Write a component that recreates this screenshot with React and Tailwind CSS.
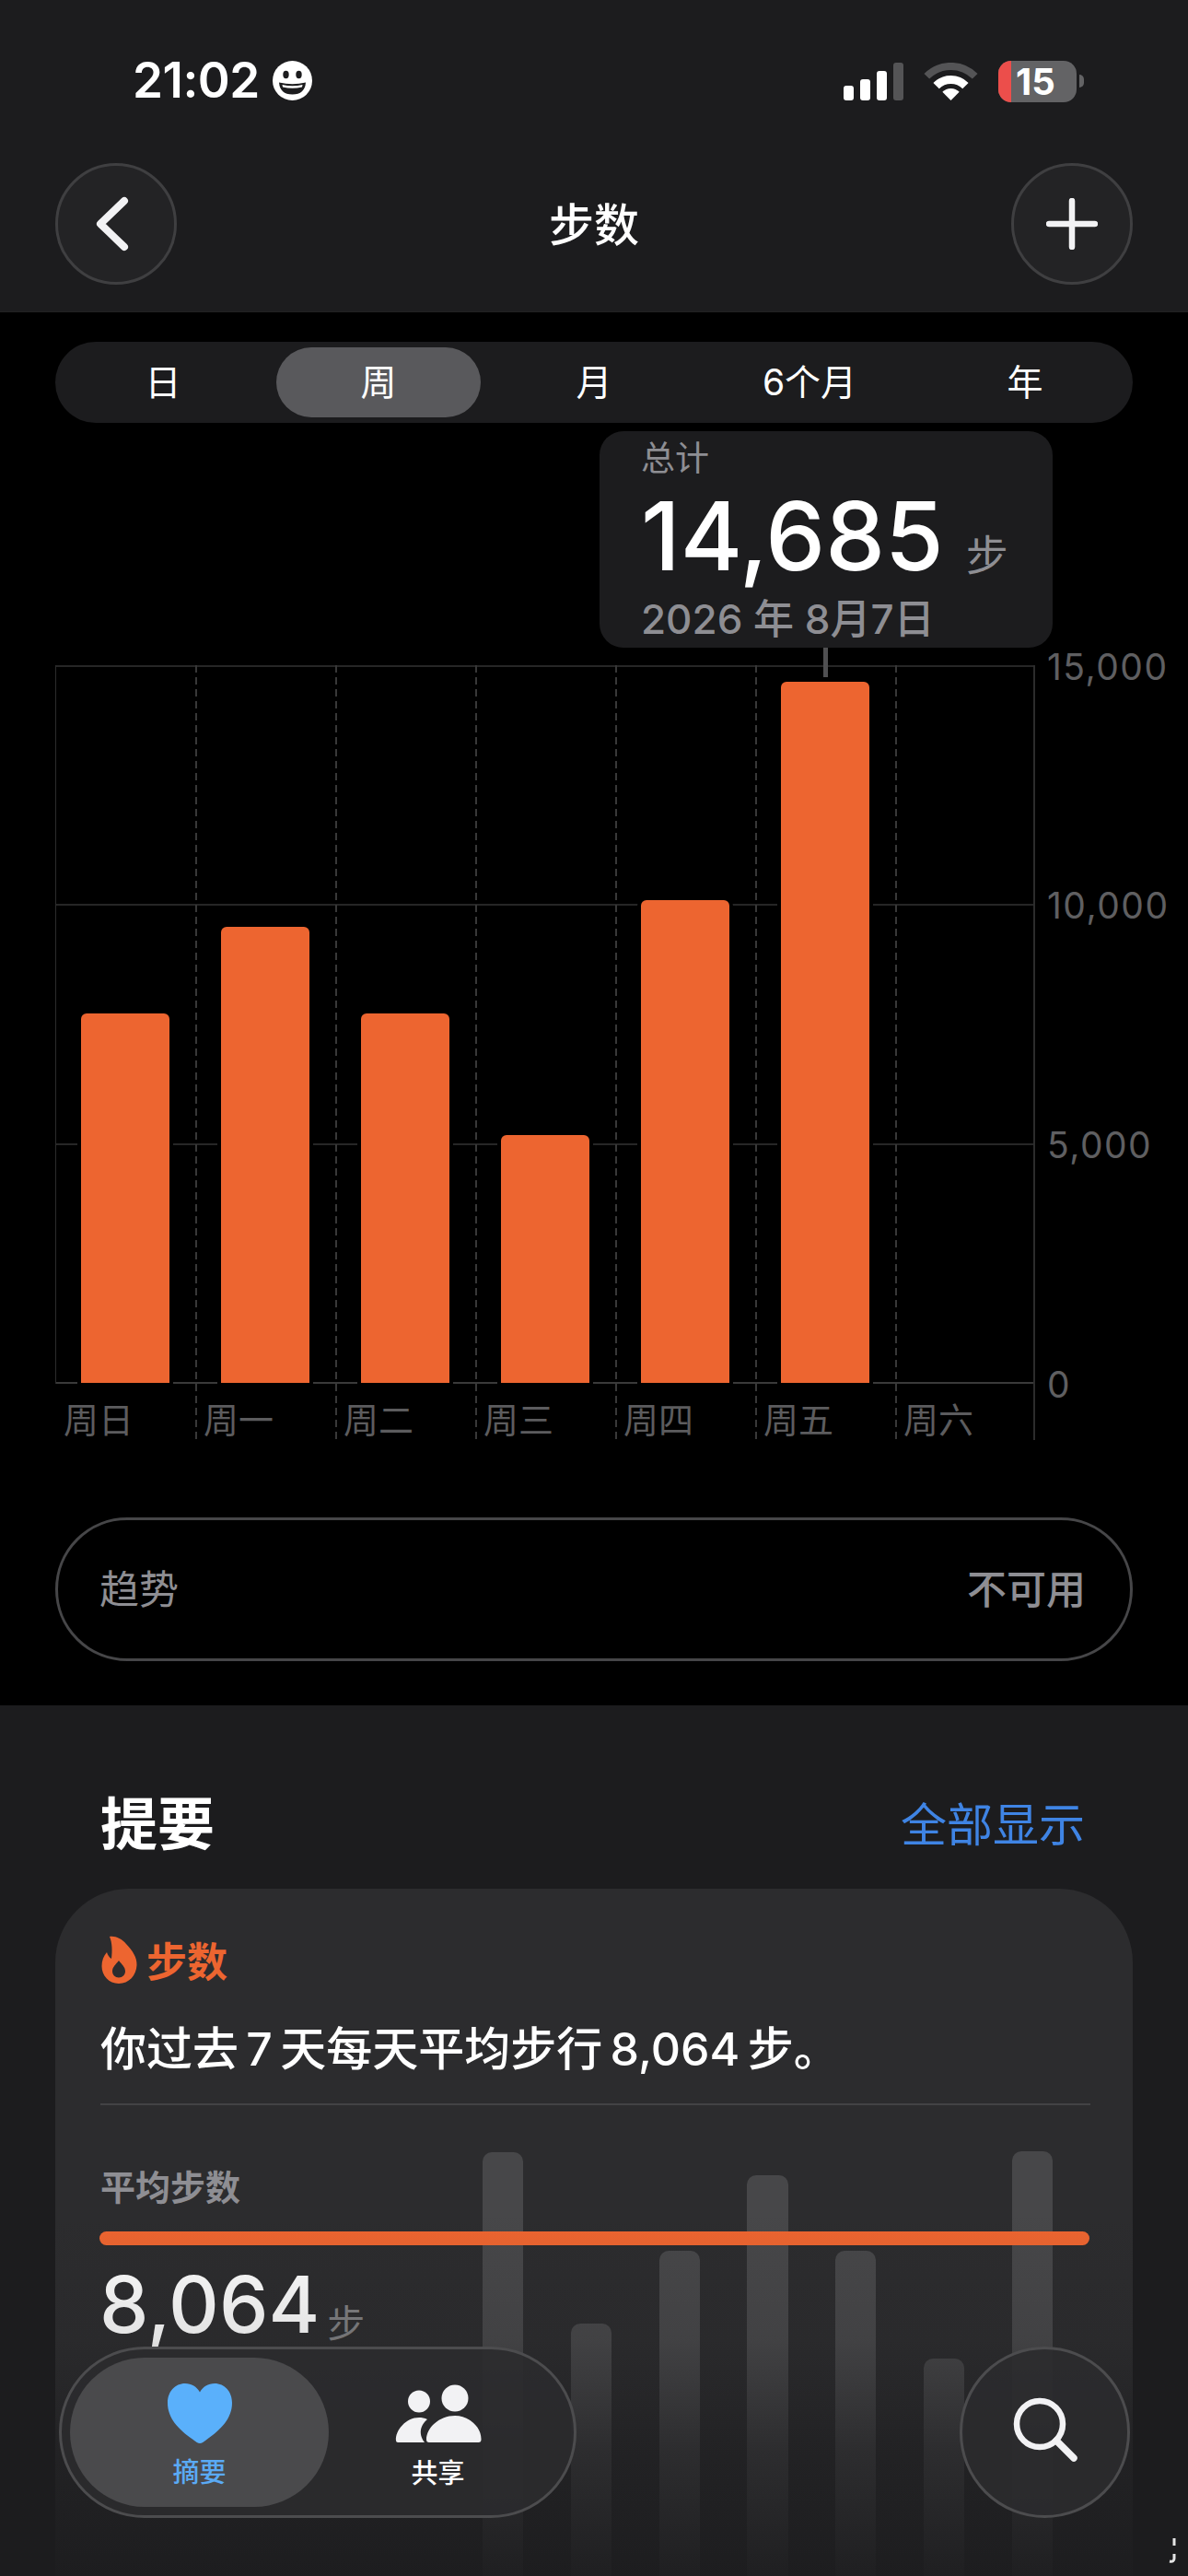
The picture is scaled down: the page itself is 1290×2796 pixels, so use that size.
import React from "react";

const dash = "absolute top-0 bottom-0 left-0 w-[2px] bg-[repeating-linear-gradient(to_bottom,#383838_0,#383838_8px,transparent_8px,transparent_13px)]";

function Round({ children }) {
  return (
    <div className="w-[132px] h-[132px] rounded-full bg-[#232325] border-[3px] border-[#3f3f41] flex items-center justify-center">
      {children}
    </div>
  );
}

function StatusIcons() {
  return (
    <div className="flex items-end">
      <div className="flex items-end gap-[7px] h-[41px]">
        <div className="w-[11px] h-[16px] rounded-[3px] bg-white" />
        <div className="w-[11px] h-[23px] rounded-[3px] bg-white" />
        <div className="w-[11px] h-[32px] rounded-[3px] bg-white" />
        <div className="w-[11px] h-[41px] rounded-[3px] bg-[#545456]" />
      </div>
      <svg className="ml-[22px]" width="59" height="41" viewBox="0 0 59 41">
        <path d="M3.3 14.8A37 37 0 0 1 55.7 14.8" fill="none" stroke="#545456" strokeWidth="8" />
        <path d="M13.6 25.1A22.5 22.5 0 0 1 45.4 25.1" fill="none" stroke="#fff" strokeWidth="9" />
        <path d="M29.5 41L20.3 31.8A13 13 0 0 1 38.7 31.8Z" fill="#fff" />
      </svg>
      <div className="ml-[22px] w-[85px] h-[45px] rounded-[14px] bg-[#636365] flex items-center -mb-[2px]">
        <div className="w-[14px] h-full rounded-l-[14px] bg-[#ec4e4b]" />
        <span className="ml-[5px] text-white text-[40px] leading-[45px] font-bold">15</span>
      </div>
      <div className="ml-[3px] mb-[14px] w-[5px] h-[14px] rounded-r-[5px] bg-[#636365]" />
    </div>
  );
}

function Header() {
  return (
    <div className="h-[339px] bg-[#1c1c1e] pt-[64px] border-b border-[#222]">
      <div className="h-[46px] pl-[144px] pr-[113px] flex items-center justify-between">
        <div className="flex items-center">
          <span className="text-white text-[53px] leading-none font-semibold tracking-[-0.5px]">21:02</span>
          <svg className="ml-[14px]" width="43" height="43" viewBox="0 0 43 43">
            <circle cx="21.5" cy="21.5" r="21.5" fill="#fff" />
            <ellipse cx="14.5" cy="15" rx="3.2" ry="4.2" fill="#1c1c1e" />
            <ellipse cx="28.5" cy="15" rx="3.2" ry="4.2" fill="#1c1c1e" />
            <path d="M7 23.5Q21.5 27 36 23.5Q35 36.5 21.5 36.5Q8 36.5 7 23.5Z" fill="#1c1c1e" />
            <path d="M10.5 26Q21.5 28.5 32.5 26L32 28.5Q21.5 31 11 28.5Z" fill="#fff" />
          </svg>
        </div>
        <StatusIcons />
      </div>
      <div className="mt-[67px] px-[60px] flex items-center justify-between">
        <Round>
          <svg width="40" height="60" viewBox="0 0 40 60" className="-ml-[6px]">
            <path d="M32 5L6 30L32 55" fill="none" stroke="#f2f2f4" strokeWidth="8" strokeLinecap="round" strokeLinejoin="round" />
          </svg>
        </Round>
        <span className="text-white text-[49px] font-medium leading-none pt-[3px]">步数</span>
        <Round>
          <svg width="56" height="56" viewBox="0 0 56 56">
            <path d="M28 3V53M3 28H53" fill="none" stroke="#f2f2f4" strokeWidth="6.5" strokeLinecap="round" />
          </svg>
        </Round>
      </div>
    </div>
  );
}

function Segments() {
  const items = ["日", "周", "月", "6个月", "年"];
  return (
    <div className="mt-[32px] mx-[60px] h-[88px] rounded-[44px] bg-[#1c1c1e] grid grid-cols-5 items-center">
      {items.map((t, i) => (
        <div key={t} className="flex justify-center">
          <div className={i === 1 ? "w-[222px] h-[76px] rounded-[38px] bg-[#59595c] flex items-center justify-center text-white text-[39px]" : "h-[76px] flex items-center justify-center text-white text-[39px]"}>
            {t}
          </div>
        </div>
      ))}
    </div>
  );
}

function Chart() {
  const bars = [
    "h-[401px]",
    "h-[495px]",
    "h-[401px]",
    "h-[269px]",
    "h-[524px]",
    "h-[761px]",
  ];
  const days = ["周日", "周一", "周二", "周三", "周四", "周五", "周六"];
  return (
    <div className="mt-[263px] ml-[60px] flex">
      <div className="relative w-[1064px] h-[841px]">
        <div className="absolute inset-x-0 top-0 h-[780px] flex flex-col justify-between">
          <div className="h-[2px] bg-[#262626]" />
          <div className="h-[2px] bg-[#262626]" />
          <div className="h-[2px] bg-[#262626]" />
          <div className="h-[2px] bg-[#3a3a3a]" />
        </div>
        <div className="absolute left-0 top-0 h-[780px] w-[1px] bg-[#2c2c2c]" />
        <div className="absolute right-0 top-0 bottom-0 w-[2px] bg-[#2c2c2c]" />
        <div className="absolute inset-0 grid grid-cols-7">
          {days.map((d, i) => (
            <div key={d} className="relative">
              {i > 0 && <div className={dash} />}
            </div>
          ))}
        </div>
        <div className="absolute inset-x-0 top-0 h-[779px] grid grid-cols-7 items-end">
          {bars.map((h, i) => (
            <div key={i} className="flex justify-center">
              <div className={`w-[96px] rounded-t-[6px] bg-[#ed6530] shadow-[0_0_0_4px_#000] ${h}`} />
            </div>
          ))}
        </div>
        <div className="absolute inset-x-0 top-[779px] h-[62px] grid grid-cols-7 items-center">
          {days.map((d) => (
            <div key={d} className="pl-[9px] pt-[18px] text-[38px] leading-none text-[#5c5c5e]">{d}</div>
          ))}
        </div>
      </div>
      <div className="ml-[13px] pt-[2px] h-[781px] flex flex-col justify-between text-[39px] text-[#5f5f61] tracking-[1.5px]">
        {["15,000", "10,000", "5,000", "0"].map((t) => (
          <div key={t} className="h-0 flex items-center">{t}</div>
        ))}
      </div>
    </div>
  );
}

function Tooltip() {
  return (
    <div className="absolute left-[651px] top-[468px] w-[492px] h-[235px] rounded-[26px] bg-[#1c1c1e] pl-[45px]">
      <div className="pt-[8px] text-[37px] leading-[44px] text-[#8e8e93]">总计</div>
      <div className="mt-[7px] flex items-baseline h-[110px]">
        <span className="text-[103px] leading-[110px] font-medium text-white">14,685</span>
        <span className="ml-[24px] text-[46px] leading-none text-[#8e8e93]">步</span>
      </div>
      <div className="mt-[9px] text-[44px] leading-[52px] font-medium text-[#8e8e93]">2026 年 8月7日</div>
      <div className="absolute left-[243px] top-[235px] w-[5px] h-[32px] bg-[#505052]" />
    </div>
  );
}

function Trend() {
  return (
    <div className="mt-[84px] mx-[60px] h-[156px] rounded-[78px] border-[3px] border-[#464648] flex items-center justify-between pl-[45px] pr-[48px] text-[43px] text-[#8e8e93]">
      <span>趋势</span>
      <span className="font-medium">不可用</span>
    </div>
  );
}

function MiniBars() {
  const hs = ["h-[460px]", "h-[274px]", "h-[353px]", "h-[435px]", "h-[353px]", "h-[236px]", "h-[461px]"];
  return (
    <div className="absolute left-[524px] bottom-0 flex items-end gap-[51.5px]">
      {hs.map((h, i) => (
        <div key={i} className={`w-[44.3px] rounded-t-[10px] bg-[#474749] ${h}`} />
      ))}
    </div>
  );
}

function Summary() {
  return (
    <div className="relative flex-1 bg-[#1c1c1e] overflow-hidden">
      <div className="pt-[95px] pl-[109px] pr-[112px] h-[165px] flex items-center justify-between">
        <span className="text-white text-[62px] font-bold leading-none">提要</span>
        <span className="text-[#3f84e4] text-[50px] leading-none">全部显示</span>
      </div>
      <div className="relative mt-[34px] mx-[60px] h-[760px] rounded-t-[80px] bg-[#2c2c2e] pt-[50px] pl-[49px]">
        <div className="absolute inset-0 overflow-hidden">
          <div className="absolute left-[-60px] top-[-2050px] w-[1290px] h-[2796px]">
            <MiniBars />
          </div>
        </div>
        <div className="relative">
          <div className="h-[54px] flex items-center">
            <svg className="ml-[1px]" width="39" height="52" viewBox="0 0 39 52">
              <path
                fillRule="evenodd"
                d="M9 1C15 0 22 3 27 9C34 16 39 24 38.5 32C38 43 30 52 19 52C8 52 0.5 43 0.5 33C0.5 27 2.5 22 6 18C7 21 8.5 23.5 11 25C12 17 12 8 9 1ZM19 27C16 31 12 34 12 38.5C12 42.5 15 45.5 19 45.5C23 45.5 26 42.5 26 38.5C26 34 22 31 19 27Z"
                fill="#ed6530"
              />
            </svg>
            <span className="ml-[10px] pt-[5px] text-[44px] leading-none font-semibold text-[#ed6530]">步数</span>
          </div>
          <div className="mt-[42px] h-[56px] flex items-center text-white text-[50px] leading-none font-medium whitespace-nowrap [word-spacing:-5px]">你过去 7 天每天平均步行 8,064 步。</div>
          <div className="mt-[31px] w-[1075px] h-[2px] bg-[#434345]" />
          <div className="mt-[69px] h-[40px] flex items-center text-[38px] leading-none font-semibold text-[#8e8e93]">平均步数</div>
          <div className="mt-[28px] -ml-[1px] w-[1075px] h-[15px] rounded-full bg-[#ed6530]" />
          <div className="mt-[15px] -ml-[1px] flex items-baseline text-white">
            <span className="text-[85px] leading-[100px] font-medium">8,064</span>
            <span className="ml-[8px] text-[41px] leading-none text-[#808082] translate-y-[5px]">步</span>
          </div>
        </div>
      </div>
      <div className="absolute inset-x-0 bottom-0 h-[396px] bg-[linear-gradient(to_bottom,rgba(28,28,30,0),rgba(28,28,30,0.12)_35%,rgba(28,28,30,0.6)_65%,rgba(28,28,30,0.92))]" />
    </div>
  );
}

function TabBar() {
  return (
    <div className="absolute left-[64px] top-[2547px] w-[562px] h-[186px] rounded-[93px] bg-[#2b2b2d]/90 border-[3px] border-[#4c4c4e] p-[9px] flex">
      <div className="w-[281px] h-[162px] rounded-[81px] bg-[#4a4a4c] flex flex-col items-center pt-[28px]">
        <svg width="70" height="65" viewBox="0 0 70 65">
          <path d="M35 65C33 65 31 63.5 27 60.5C12 50 0 38 0 21C0 9 8 0 19 0C26 0 31.5 3.5 35 9.5C38.5 3.5 44 0 51 0C62 0 70 9 70 21C70 38 58 50 43 60.5C39 63.5 37 65 35 65Z" fill="#5ab0fb" />
        </svg>
        <span className="mt-[17px] text-[29px] leading-none font-medium text-[#5aaaf5]">摘要</span>
      </div>
      <div className="flex-1 flex flex-col items-center pt-[29px] pr-[20px]">
        <svg width="94" height="64" viewBox="0 0 94 64">
          <circle cx="26" cy="18.5" r="12" fill="#f2f2f4" />
          <circle cx="65" cy="15" r="14.5" fill="#f2f2f4" />
          <path d="M1 61C0 50 12 36 26 36C29 36 32 36.5 35 38C29 43 24 52 32 63H3C2 63 1 62 1 61Z" fill="#f2f2f4" />
          <path d="M37 63C35 63 34 62 34 60C34 47 48 34 65 34C81 34 94 47 93.5 60C93.5 62 92.5 63 90.5 63Z" fill="#f2f2f4" />
        </svg>
        <span className="mt-[18px] text-[29px] leading-none font-medium text-white">共享</span>
      </div>
    </div>
  );
}

function SearchButton() {
  return (
    <div className="absolute left-[1042px] top-[2547px] w-[185px] h-[186px] rounded-full bg-[#2b2b2d]/90 border-[3px] border-[#4c4c4e] flex items-center justify-center">
      <svg width="72" height="72" viewBox="0 0 72 72" className="mt-[-4px] ml-[2px]">
        <circle cx="29" cy="29" r="25" fill="none" stroke="#f2f2f4" strokeWidth="6.5" />
        <path d="M47 47L66 66" fill="none" stroke="#f2f2f4" strokeWidth="7.5" strokeLinecap="round" />
      </svg>
    </div>
  );
}

export default function App() {
  return (
    <div className="relative w-[1290px] h-[2796px] overflow-hidden bg-black flex flex-col font-[family-name:Inter,'Noto_Sans_CJK_SC',sans-serif]">
      <Header />
      <div className="h-[1512px] bg-black flex flex-col shrink-0">
        <Segments />
        <Chart />
        <Trend />
      </div>
      <Summary />
      <Tooltip />
      <TabBar />
      <SearchButton />
      <svg className="absolute left-[1268px] top-[2752px]" width="10" height="32" viewBox="0 0 10 32">
        <path d="M7 3V11" stroke="#e5e5e5" strokeWidth="3" />
        <path d="M7 20V25Q7 29 2 28" stroke="#e5e5e5" strokeWidth="3" fill="none" />
      </svg>
    </div>
  );
}
